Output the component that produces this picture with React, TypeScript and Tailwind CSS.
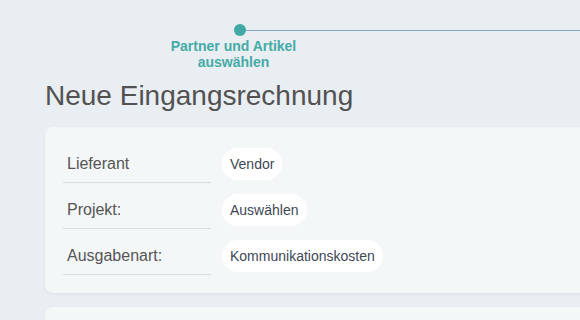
export default function App() {
  const rows = [
    { label: "Lieferant", value: "Vendor" },
    { label: "Projekt:", value: "Auswählen" },
    { label: "Ausgabenart:", value: "Kommunikationskosten" },
  ];

  return (
    <div className="w-[580px] h-[320px] overflow-hidden bg-[#e9eef2] font-['Liberation_Sans',Arial,sans-serif]">
      <div className="w-[680px] pt-[24px]">
        {/* stepper */}
        <div className="flex items-center pl-[234px]">
          <div className="w-[12px] h-[12px] rounded-full bg-[#40a9a6] shrink-0" />
          <div className="flex-1 h-px bg-[#84a6c0]" />
        </div>
        <div className="pl-[165px] mt-[3px]">
          <div className="w-[137px] text-center text-[14px] leading-[15.5px] font-bold text-[#45aba7]">
            Partner und Artikel
            <br />
            auswählen
          </div>
        </div>

        <div className="pl-[45px]">
          <h1 className="mt-[9px] text-[28px] leading-[34px] text-[#525252]">
            Neue Eingangsrechnung
          </h1>

          <div className="mt-[14px] bg-[#f4f7f8] rounded-lg shadow-[0_1px_3px_rgba(0,0,0,0.06)] pt-[21px] pb-[18px] pl-[18px] flex flex-col gap-[11px]">
            {rows.map((r) => (
              <div key={r.label} className="flex items-start gap-[11px]">
                <div className="w-[148px] h-[35px] border-b border-[#d8dcdf] flex items-center pl-[4px] pb-[3px] text-[16px] text-[#555555]">
                  {r.label}
                </div>
                <div className="h-[32px] px-[8px] rounded-full bg-white flex items-center text-[14px] text-[#3e4756]">
                  {r.value}
                </div>
              </div>
            ))}
          </div>

          <div className="mt-[14px] h-[60px] bg-[#f4f7f8] rounded-lg shadow-[0_1px_3px_rgba(0,0,0,0.06)]" />
        </div>
      </div>
    </div>
  );
}
